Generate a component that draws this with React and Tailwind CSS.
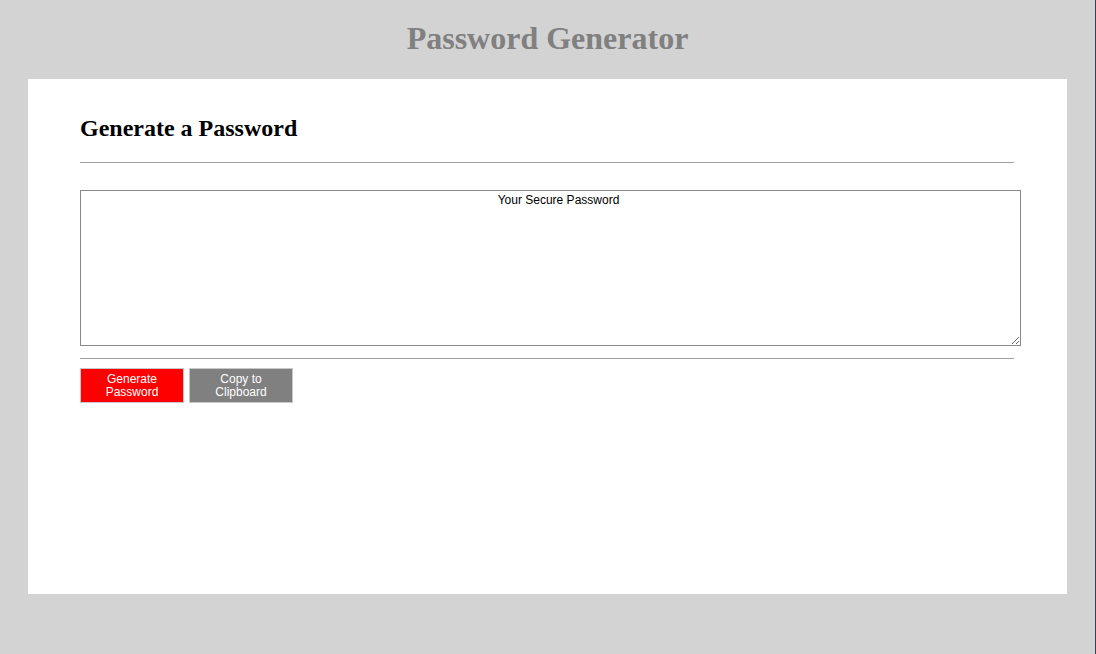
import React from 'react';

export default function App() {
  return (
    <div className="w-[1096px] h-[654px] bg-[#d3d3d3] border-r border-[#3b3f4c] overflow-hidden">
      {/* page title */}
      <header className="h-[79px] pt-[20px] text-center">
        <h1 className="text-[32px] leading-[37px] font-bold text-[#808080] font-['Liberation_Serif',serif]">
          Password Generator
        </h1>
      </header>

      {/* card */}
      <div className="mx-[28px] w-[1039px] h-[515px] bg-white pt-[35px] pl-[52px] pr-[53px]">
        <h2 className="text-[24px] leading-[28px] font-bold text-black font-['Liberation_Serif',serif]">
          Generate a Password
        </h2>
        <hr className="mt-[20px] border-0 border-t border-[#a0a0a0]" />

        <textarea
          readOnly
          placeholder="Your Secure Password"
          className="block mt-[27px] w-[941px] h-[156px] border border-[#8a8a8a] text-center text-[12px] leading-[14px] pt-[2px] pl-[16px] font-['Liberation_Sans',sans-serif] placeholder:text-black outline-none"
        />

        <hr className="mt-[12px] border-0 border-t border-[#a0a0a0]" />

        <div className="flex gap-[5px] mt-[9px]">
          <button className="w-[104px] h-[35px] bg-[#ff0000] border border-[#c8c8c8] text-white text-[12px] leading-[13px] font-['Liberation_Sans',sans-serif]">
            Generate<br />Password
          </button>
          <button className="w-[104px] h-[35px] bg-[#808080] border border-[#c8c8c8] text-white text-[12px] leading-[13px] font-['Liberation_Sans',sans-serif]">
            Copy to<br />Clipboard
          </button>
        </div>
      </div>
    </div>
  );
}
